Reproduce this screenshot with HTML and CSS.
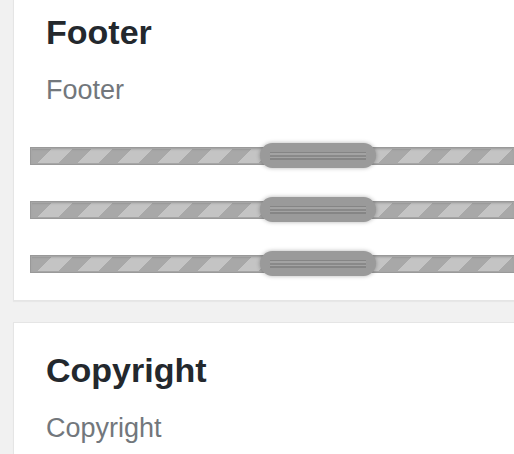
FILE: index.html
```html
<!DOCTYPE html>
<html>
<head>
<meta charset="utf-8">
<link rel="stylesheet" href="styles.css">
</head>
<body>
<div class="page">
  <section class="card card-first">
    <h2 class="title">Footer</h2>
    <p class="subtitle">Footer</p>
    <div class="sliders">
      <div class="track"><div class="handle"><span class="grip"></span></div></div>
      <div class="track"><div class="handle"><span class="grip"></span></div></div>
      <div class="track"><div class="handle"><span class="grip"></span></div></div>
    </div>
  </section>
  <section class="card">
    <h2 class="title">Copyright</h2>
    <p class="subtitle">Copyright</p>
  </section>
</div>
</body>
</html>
```
FILE: styles.css
```css
html, body {
  margin: 0;
  padding: 0;
  background: #f1f1f1;
  overflow: hidden;
}
.page {
  display: flex;
  flex-direction: column;
  gap: 21px;
  padding-left: 13px;
  margin-top: -16px;
  font-family: "Liberation Sans", Arial, sans-serif;
}
.card {
  background: #fff;
  border: 1px solid #e5e5e5;
  border-right: none;
  box-shadow: 0 1px 1px rgba(0,0,0,0.04);
  padding: 27px 0 40px 32px;
}
.card-first {
  padding-bottom: 27px;
}
.title {
  margin: 0;
  font-size: 34px;
  line-height: 40px;
  font-weight: 700;
  color: #23282d;
}
.subtitle {
  margin: 22px 0 0;
  font-size: 27px;
  line-height: 32px;
  color: #72777c;
}
.sliders {
  display: flex;
  flex-direction: column;
  gap: 36px;
  margin: 41px 0 0 -16px;
}
.track {
  position: relative;
  height: 18px;
  box-sizing: border-box;
  border: 1px solid #999999;
  border-right: none;
  background-color: #a8a8a8;
  background-image: repeating-linear-gradient(135deg, #a8a8a8 0 13px, #c4c4c4 13px 28.28px);
  background-position: 3px 0;
  box-shadow: inset 0 0 0 1px #a6a6a6, inset 0 2px 2px rgba(0,0,0,0.1);
}
.handle {
  position: absolute;
  left: 229px;
  top: -5px;
  width: 116px;
  height: 25px;
  border-radius: 13px;
  background: #9a9a9a;
  box-shadow: 0 0 4px rgba(0,0,0,0.3);
  display: flex;
  align-items: center;
  justify-content: center;
}
.grip {
  display: block;
  width: 96px;
  height: 8px;
  background: linear-gradient(#858585 0 1.5px, #a3a3a3 1.5px 3.2px, #898989 3.2px 4.8px, #a3a3a3 4.8px 6.5px, #858585 6.5px 8px);
}
```
